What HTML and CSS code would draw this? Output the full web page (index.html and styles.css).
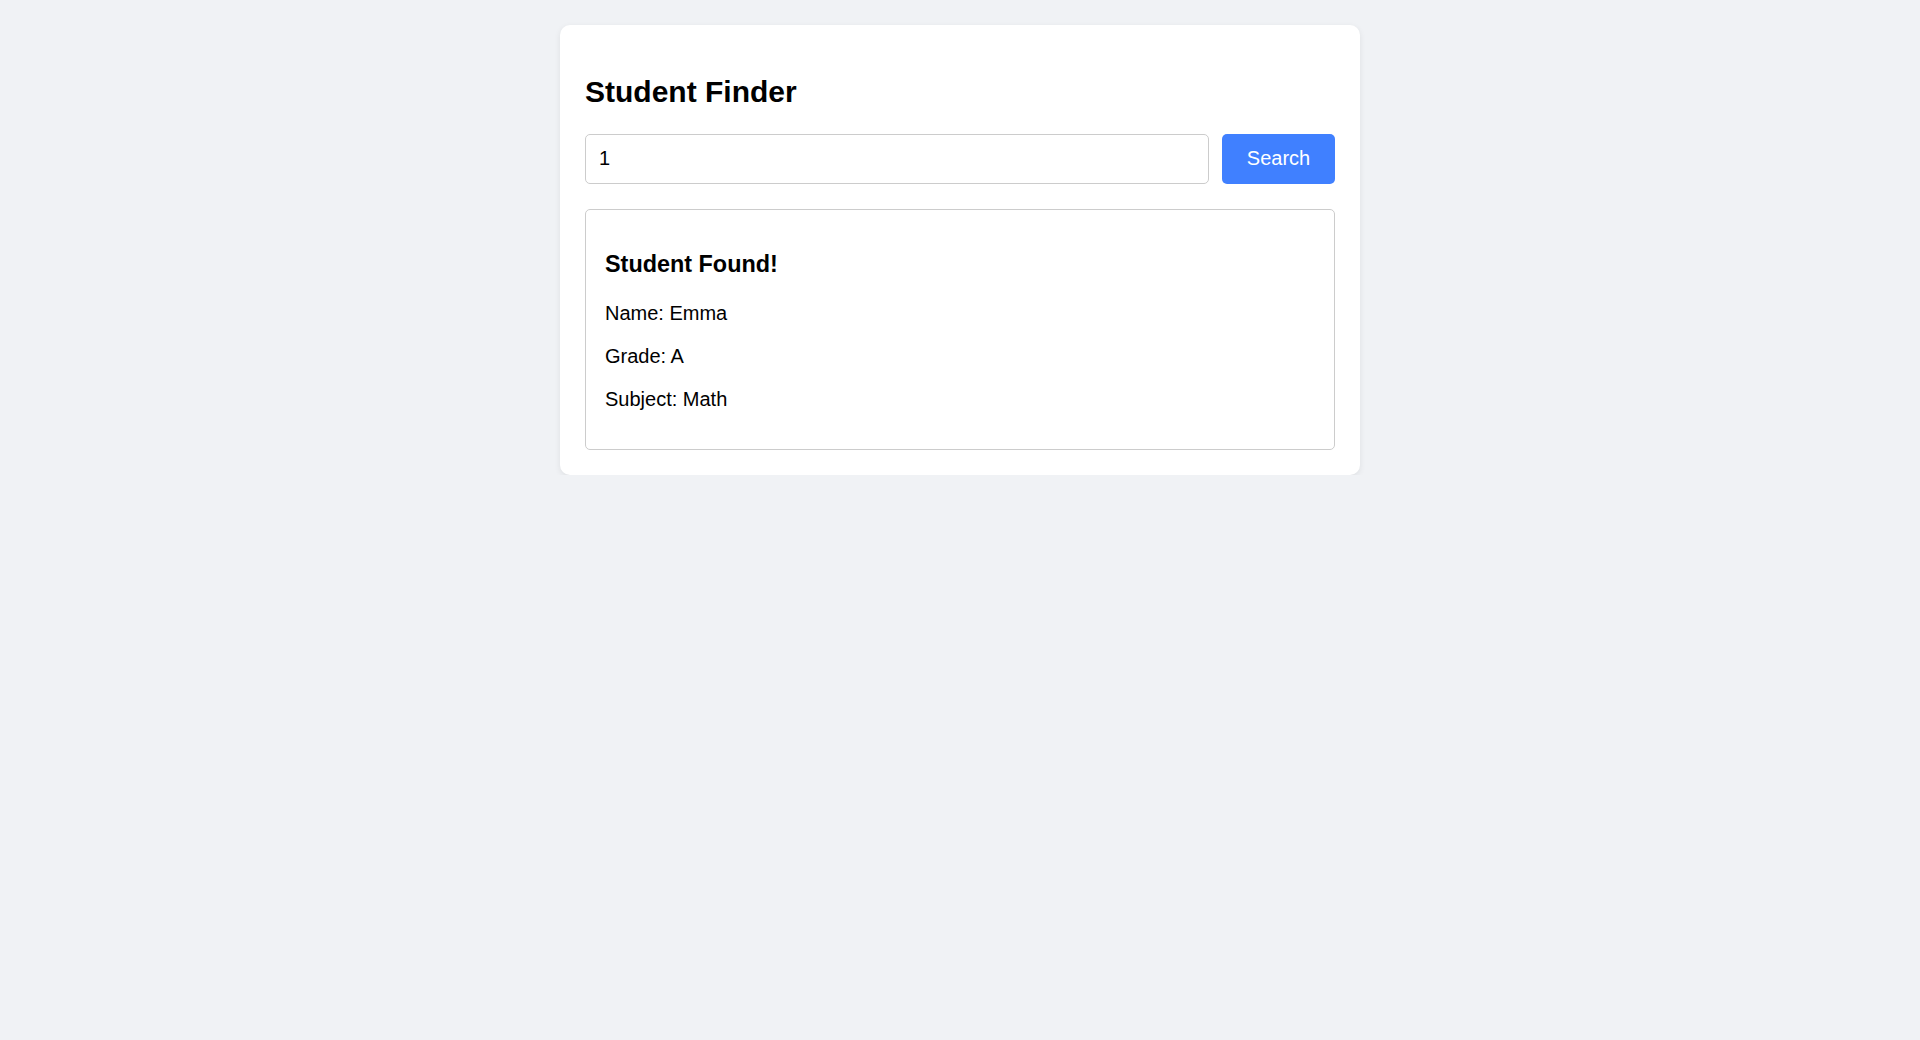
FILE: index.html
```html
<!DOCTYPE html>
<html lang="en">
<head>
<meta charset="utf-8">
<title>Student Finder</title>
<link rel="stylesheet" href="styles.css">
</head>
<body>
<div class="card">
  <h2 class="title">Student Finder</h2>
  <div class="search-row">
    <input class="search-input" type="text" value="1">
    <button class="search-btn">Search</button>
  </div>
  <div class="result">
    <h3 class="result-title">Student Found!</h3>
    <p class="result-line">Name: Emma</p>
    <p class="result-line">Grade: A</p>
    <p class="result-line">Subject: Math</p>
  </div>
</div>
</body>
</html>
```
FILE: styles.css
```css
html, body {
  margin: 0;
  padding: 0;
}
body {
  background: #f0f2f5;
  font-family: "Liberation Sans", Arial, sans-serif;
  color: #000;
  padding-top: 25px;
}
.card {
  width: 800px;
  box-sizing: border-box;
  margin: 0 auto;
  background: #fff;
  border-radius: 10px;
  padding: 25px;
  box-shadow: 0 2px 6px rgba(0, 0, 0, 0.08);
}
.title {
  font-size: 30px;
  font-weight: bold;
  margin: 25px 0 24px;
  line-height: 34.5px;
}
.search-row {
  display: flex;
  gap: 13px;
  margin-bottom: 25px;
}
.search-input {
  flex: 1;
  height: 50px;
  box-sizing: border-box;
  border: 1px solid #cccccc;
  border-radius: 5px;
  padding: 0 13px;
  font-family: "Liberation Sans", Arial, sans-serif;
  font-size: 20px;
  color: #000;
  outline: none;
}
.search-btn {
  width: 113px;
  height: 50px;
  box-sizing: border-box;
  border: none;
  border-radius: 5px;
  background: #4080ff;
  color: #fff;
  font-family: "Liberation Sans", Arial, sans-serif;
  font-size: 20px;
  padding: 0;
  cursor: pointer;
}
.result {
  border: 1px solid #cccccc;
  border-radius: 5px;
  padding: 18.5px 19px;
}
.result-title {
  font-size: 23.4px;
  font-weight: bold;
  margin: 23.4px 0;
  line-height: 27px;
}
.result-line {
  font-size: 20px;
  margin: 20px 0;
  line-height: 23px;
}
```
